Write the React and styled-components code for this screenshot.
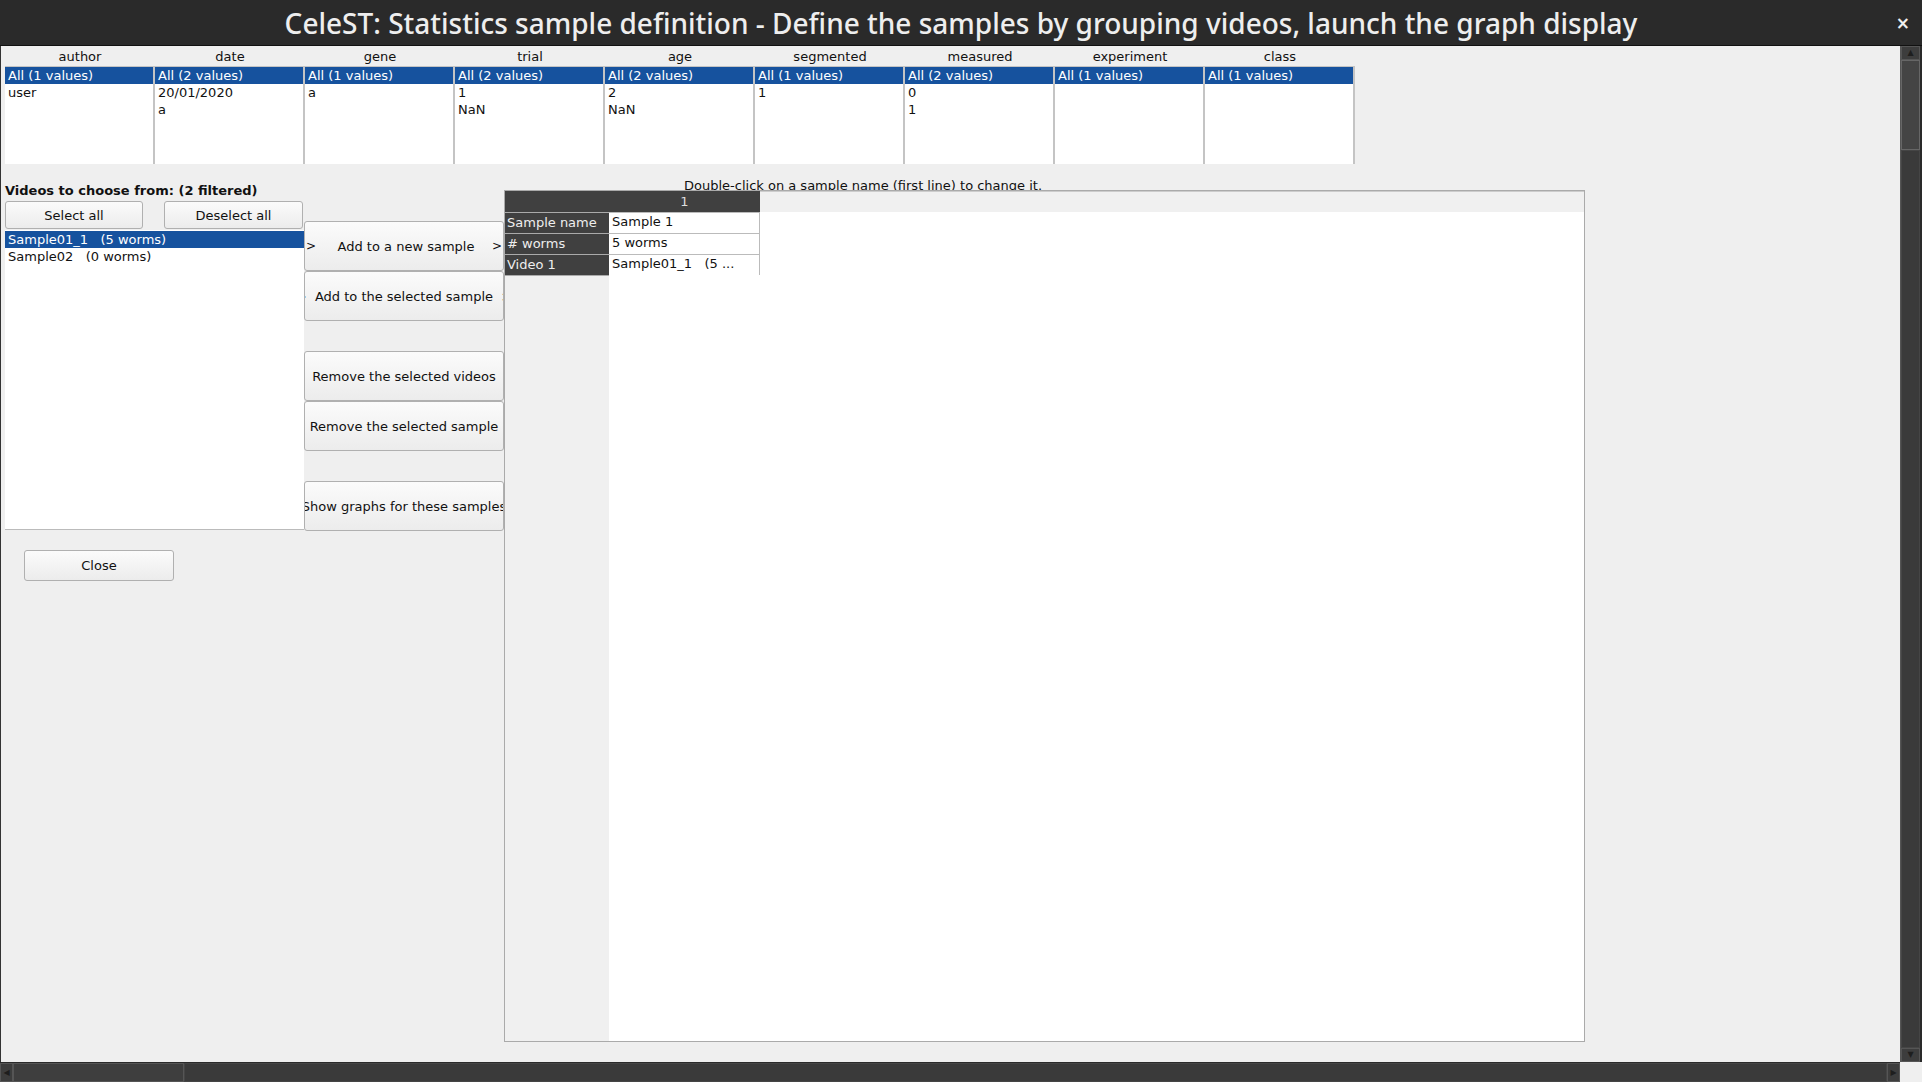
import styled, { createGlobalStyle } from "styled-components";

const filtros = [
  { nome: "author", valores: ["All (1 values)", "user"] },
  { nome: "date", valores: ["All (2 values)", "20/01/2020", "a"] },
  { nome: "gene", valores: ["All (1 values)", "a"] },
  { nome: "trial", valores: ["All (2 values)", "1", "NaN"] },
  { nome: "age", valores: ["All (2 values)", "2", "NaN"] },
  { nome: "segmented", valores: ["All (1 values)", "1"] },
  { nome: "measured", valores: ["All (2 values)", "0", "1"] },
  { nome: "experiment", valores: ["All (1 values)"] },
  { nome: "class", valores: ["All (1 values)"] },
];

const videos = ["Sample01_1   (5 worms)", "Sample02   (0 worms)"];

const linhas = [
  { rotulo: "Sample name", valor: "Sample 1" },
  { rotulo: "# worms", valor: "5 worms" },
  { rotulo: "Video 1", valor: "Sample01_1   (5 ..." },
];

export default function App() {
  return (
    <Janela>
      <GlobalStyle />
      <BarraTitulo>
        <Titulo>
          CeleST: Statistics sample definition - Define the samples by grouping videos, launch the graph display
        </Titulo>
        <Fechar>×</Fechar>
      </BarraTitulo>

      <Meio>
        <Conteudo>
          {/* filtros por coluna */}
          <LinhaFiltros>
            {filtros.map((f) => (
              <ColunaFiltro key={f.nome}>
                <CabecalhoFiltro>{f.nome}</CabecalhoFiltro>
                <ListaFiltro>
                  {f.valores.map((v, i) => (
                    <ItemLista key={i} $sel={i === 0}>
                      {v}
                    </ItemLista>
                  ))}
                </ListaFiltro>
              </ColunaFiltro>
            ))}
          </LinhaFiltros>

          <Inferior>
            <PainelEsquerdo>
              <Rotulo>Videos to choose from: (2 filtered)</Rotulo>
              <LinhaEscolha>
                <ColunaEscolha>
                  <ParBotoes>
                    <Botao $w={138} $h={28}>Select all</Botao>
                    <Botao $w={139} $h={28}>Deselect all</Botao>
                  </ParBotoes>
                  <ListaVideos>
                    {videos.map((v, i) => (
                      <ItemVideo key={v} $sel={i === 0}>
                        {v}
                      </ItemVideo>
                    ))}
                  </ListaVideos>
                </ColunaEscolha>

                <ColunaAcoes>
                  <BotaoAcao>
                    <Seta>&gt;</Seta>
                    <span>Add to a new sample</span>
                    <Seta>&gt;</Seta>
                  </BotaoAcao>
                  <BotaoAcao $centro>
                    <Texto>{">  Add to the selected sample  >"}</Texto>
                  </BotaoAcao>
                  <Espaco />
                  <BotaoAcao $centro>
                    <Texto>Remove the selected videos</Texto>
                  </BotaoAcao>
                  <BotaoAcao $centro>
                    <Texto>Remove the selected sample</Texto>
                  </BotaoAcao>
                  <Espaco />
                  <BotaoAcao $centro>
                    <Texto>Show graphs for these samples</Texto>
                  </BotaoAcao>
                </ColunaAcoes>
              </LinhaEscolha>
              <BotaoFechar>Close</BotaoFechar>
            </PainelEsquerdo>

            <PainelDireito>
              <Dica>Double-click on a sample name (first line) to change it.</Dica>
              <Tabela>
                <Canto />
                <CabecalhoColuna>1</CabecalhoColuna>
                <CabecalhoVazio />
                {linhas.map((l) => (
                  <Linha key={l.rotulo}>
                    <CabecalhoLinha>{l.rotulo}</CabecalhoLinha>
                    <Celula>{l.valor}</Celula>
                    <Vazio />
                  </Linha>
                ))}
                <CabecalhoLinhaVazio />
                <Vazio $alto />
              </Tabela>
            </PainelDireito>
          </Inferior>
        </Conteudo>

        <BarraVertical>
          <SetaBarra $v>▲</SetaBarra>
          <PolegarV />
          <Trilho />
          <SetaBarra $v>▼</SetaBarra>
        </BarraVertical>
      </Meio>

      <Rodape>
        <BarraHorizontal>
          <SetaBarra>◀</SetaBarra>
          <PolegarH />
          <Trilho />
          <SetaBarra>▶</SetaBarra>
        </BarraHorizontal>
        <CantoRodape />
      </Rodape>
    </Janela>
  );
}

// Estilização
const GlobalStyle = createGlobalStyle`
  html, body {
    margin: 0;
    padding: 0;
    overflow: hidden;
    background: #efefef;
  }
  * {
    box-sizing: border-box;
  }
`;

const Janela = styled.div`
  width: 100vw;
  height: 100vh;
  display: flex;
  flex-direction: column;
  font-family: "DejaVu Sans", sans-serif;
  font-size: 13px;
  color: #111;
  background: #efefef;
`;

const BarraTitulo = styled.div`
  height: 46px;
  flex-shrink: 0;
  background: #2a2a2a;
  border-bottom: 1px solid #111;
  display: flex;
  align-items: center;
  justify-content: center;
  position: relative;
`;

const Titulo = styled.div`
  font-family: "Noto Sans", sans-serif;
  font-weight: 500;
  font-size: 28px;
  color: #eeeeee;
  white-space: nowrap;
  margin-top: 0;
`;

const Fechar = styled.div`
  position: absolute;
  right: 12px;
  top: 13px;
  color: #f0f0f0;
  font-family: "DejaVu Sans", sans-serif;
  font-size: 17px;
  font-weight: bold;
`;

const Meio = styled.div`
  flex: 1;
  display: flex;
  min-height: 0;
`;

const Conteudo = styled.div`
  flex: 1;
  border-left: 1px solid #333;
  display: flex;
  flex-direction: column;
  overflow: hidden;
`;

const LinhaFiltros = styled.div`
  display: flex;
  padding-left: 4px;
`;

const ColunaFiltro = styled.div`
  width: 150px;
  display: flex;
  flex-direction: column;
`;

const CabecalhoFiltro = styled.div`
  height: 20px;
  line-height: 22px;
  text-align: center;
`;

const ListaFiltro = styled.div`
  height: 98px;
  background: #fff;
  border-right: 2px solid #c4c4c4;
  border-top: 1px solid #c4c4c4;
`;

const ItemLista = styled.div`
  height: 17px;
  line-height: 17px;
  padding-left: 3px;
  white-space: pre;
  background: ${(p) => (p.$sel ? "#16529e" : "transparent")};
  color: ${(p) => (p.$sel ? "#fff" : "#111")};
`;

const Inferior = styled.div`
  display: flex;
  align-items: flex-start;
`;

const PainelEsquerdo = styled.div`
  width: 503px;
  padding-left: 4px;
  display: flex;
  flex-direction: column;
`;

const Rotulo = styled.div`
  margin-top: 19px;
  height: 16px;
  line-height: 16px;
  font-weight: bold;
`;

const LinhaEscolha = styled.div`
  display: flex;
`;

const ColunaEscolha = styled.div`
  width: 299px;
  display: flex;
  flex-direction: column;
`;

const ParBotoes = styled.div`
  display: flex;
  gap: 21px;
  margin-top: 2px;
`;

const Botao = styled.button`
  width: ${(p) => p.$w}px;
  height: ${(p) => p.$h}px;
  font-family: "DejaVu Sans", sans-serif;
  font-size: 13px;
  color: #111;
  background: linear-gradient(180deg, #fbfbfb 0%, #ececec 100%);
  border: 1px solid #b0b0b0;
  border-radius: 3px;
  padding: 0;
  cursor: pointer;
`;

const ListaVideos = styled.div`
  margin-top: 1px;
  height: 300px;
  background: #fff;
  border-bottom: 1px solid #bbb;
  padding-top: 1px;
`;

const ItemVideo = styled.div`
  height: 17px;
  line-height: 17px;
  padding-left: 3px;
  white-space: pre;
  background: ${(p) => (p.$sel ? "#16529e" : "transparent")};
  color: ${(p) => (p.$sel ? "#fff" : "#111")};
`;

const ColunaAcoes = styled.div`
  width: 200px;
  margin-top: 22px;
  display: flex;
  flex-direction: column;
`;

const BotaoAcao = styled.button`
  width: 200px;
  height: 50px;
  display: flex;
  align-items: center;
  justify-content: ${(p) => (p.$centro ? "center" : "space-between")};
  overflow: hidden;
  padding: 0 1px;
  font-family: "DejaVu Sans", sans-serif;
  font-size: 13px;
  color: #111;
  background: linear-gradient(180deg, #fbfbfb 0%, #ececec 100%);
  border: 1px solid #b0b0b0;
  border-radius: 3px;
  cursor: pointer;

  & > span:nth-child(2) {
    margin-left: 4px;
  }
`;

const Seta = styled.span`
  font-size: 12px;
`;

const Texto = styled.span`
  white-space: pre;
  flex-shrink: 0;
`;

const Espaco = styled.div`
  height: 30px;
`;

const BotaoFechar = styled(Botao)`
  width: 150px;
  height: 31px;
  margin: 19px 0 0 19px;
`;

const PainelDireito = styled.div`
  width: 1081px;
  display: flex;
  flex-direction: column;
`;

const Dica = styled.div`
  margin-top: 14px;
  height: 16px;
  line-height: 16px;
  padding-left: 180px;
  white-space: nowrap;
`;

const Tabela = styled.div`
  margin-top: -4px;
  height: 852px;
  border: 1px solid #aaa;
  background: #fff;
  display: grid;
  grid-template-columns: 104px 151px 1fr;
  grid-template-rows: 21px 21px 21px 21px 1fr;
  position: relative;
`;

const Canto = styled.div`
  background: #404040;
`;

const CabecalhoColuna = styled.div`
  background: #404040;
  color: #ddd;
  text-align: center;
  line-height: 21px;
`;

const CabecalhoVazio = styled.div`
  background: #f0f0f0;
  border-top: 1px solid #ccc;
`;

const Linha = styled.div`
  display: contents;
`;

const CabecalhoLinha = styled.div`
  background: #404040;
  color: #eee;
  border-top: 1px solid #aaa;
  line-height: 20px;
  padding-left: 2px;
  white-space: nowrap;
`;

const Celula = styled.div`
  background: #fff;
  border-top: 1px solid #bbb;
  border-bottom: 1px solid #bbb;
  border-right: 1px solid #bbb;
  margin-bottom: -1px;
  line-height: 17px;
  padding-left: 3px;
  white-space: pre;
`;

const Vazio = styled.div`
  background: #fff;
  grid-column: ${(p) => (p.$alto ? "2 / 4" : "auto")};
`;

const CabecalhoLinhaVazio = styled.div`
  background: #f0f0f0;
  border-top: 1px solid #aaa;
`;

const BarraVertical = styled.div`
  width: 22px;
  flex-shrink: 0;
  background: #3a3a3a;
  border-left: 1px solid #555;
  border-right: 2px solid #2a2a2a;
  display: flex;
  flex-direction: column;
`;

const SetaBarra = styled.div`
  ${(p) => (p.$v ? "height: 14px; width: 100%;" : "width: 13px; height: 100%;")}
  flex-shrink: 0;
  background: #3d3d3d;
  border: 1px solid #555;
  color: #1e1e1e;
  font-size: 8px;
  display: flex;
  align-items: center;
  justify-content: center;
  line-height: 1;
`;

const PolegarV = styled.div`
  height: 90px;
  flex-shrink: 0;
  background: #444;
  border: 1px solid #666;
`;

const PolegarH = styled.div`
  width: 171px;
  flex-shrink: 0;
  background: #3e3e3e;
  border: 1px solid #555;
`;

const Trilho = styled.div`
  flex: 1;
  background: #3a3a3a;
  border: 1px solid #454545;
`;

const Rodape = styled.div`
  height: 20px;
  flex-shrink: 0;
  display: flex;
`;

const BarraHorizontal = styled.div`
  flex: 1;
  display: flex;
  background: #3a3a3a;
  border-top: 1px solid #2a2a2a;
`;

const CantoRodape = styled.div`
  width: 22px;
  background: #efefef;
`;
